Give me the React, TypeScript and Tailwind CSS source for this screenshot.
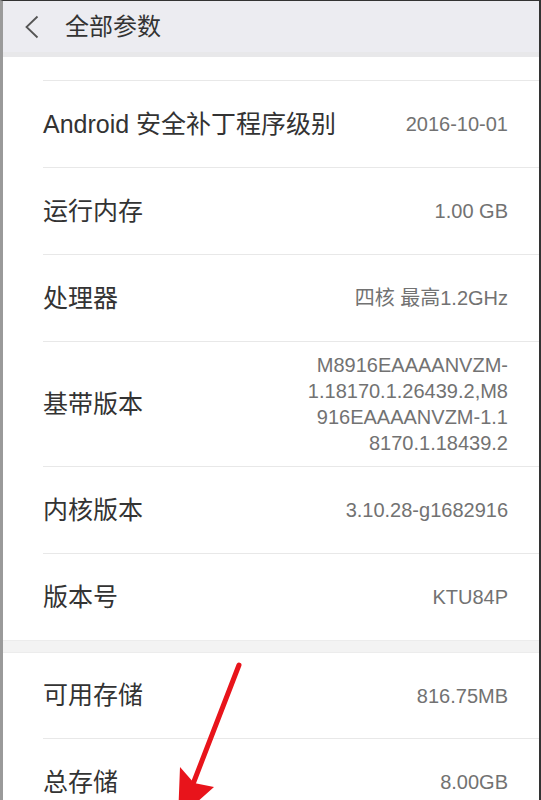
import React from "react";

type Row = { label: string; value: string[]; h: string; last?: boolean };

const FONT = { fontFamily: '"Liberation Sans", "Noto Sans CJK SC", sans-serif' };

const group1: Row[] = [
  { label: "Android 安全补丁程序级别", value: ["2016-10-01"], h: "h-[86px]" },
  { label: "运行内存", value: ["1.00 GB"], h: "h-[86px]" },
  { label: "处理器", value: ["四核 最高1.2GHz"], h: "h-[86px]" },
  {
    label: "基带版本",
    value: ["M8916EAAAANVZM-", "1.18170.1.26439.2,M8", "916EAAAANVZM-1.1", "8170.1.18439.2"],
    h: "h-[124px]",
  },
  { label: "内核版本", value: ["3.10.28-g1682916"], h: "h-[86px]" },
  { label: "版本号", value: ["KTU84P"], h: "h-[86px]", last: true },
];

const group2: Row[] = [
  { label: "可用存储", value: ["816.75MB"], h: "h-[85px]" },
  { label: "总存储", value: ["8.00GB"], h: "h-[86px]", last: true },
];

function ParamRow({ row }: { row: Row }) {
  return (
    <div className={"ml-[40px] " + (row.last ? "" : "border-b border-[#e8e8e8]")}>
      <div className={row.h + " flex items-center justify-between pr-[31px]"}>
        <span className="text-[25px] text-[#333333] leading-none">{row.label}</span>
        <div className="flex flex-col items-end text-[20px] leading-[26px] text-[#727272]">
          {row.value.map((v, i) => (
            <span key={i}>{v}</span>
          ))}
        </div>
      </div>
    </div>
  );
}

export default function App() {
  return (
    <div
      className="relative w-[541px] h-[800px] overflow-hidden bg-white border-t border-t-[#333333] border-l-[3px] border-l-[#9a9a9a] border-r-2 border-r-[#333333]"
      style={FONT}
    >
      {/* header */}
      <div className="h-[51px] bg-[#ececf1] flex items-center">
        <svg width="14" height="24" viewBox="0 0 14 24" className="ml-[22px]">
          <polyline points="12.5,1.5 1.5,12 12.5,22.5" fill="none" stroke="#555555" strokeWidth="1.8" />
        </svg>
        <span className="ml-[26px] text-[24px] text-[#333333] leading-none">全部参数</span>
      </div>
      <div className="h-[5px] bg-[#e8e8ea]" />

      {/* partial row scrolled away */}
      <div className="ml-[40px] h-[24px] border-b border-[#e8e8e8]" />

      {group1.map((r, i) => (
        <ParamRow key={i} row={r} />
      ))}

      <div className="h-[13px] bg-[#f3f3f3] border-y border-[#ececec]" />

      {group2.map((r, i) => (
        <ParamRow key={i} row={r} />
      ))}

      {/* red annotation arrow */}
      <svg className="absolute left-0 top-0 pointer-events-none" width="541" height="800" viewBox="0 0 541 800">
        <line x1="236" y1="664" x2="190" y2="783" stroke="#e8141b" strokeWidth="5" strokeLinecap="round" />
        <polygon points="175,818 177,766 191,782 211,786" fill="#e8141b" />
      </svg>
    </div>
  );
}
